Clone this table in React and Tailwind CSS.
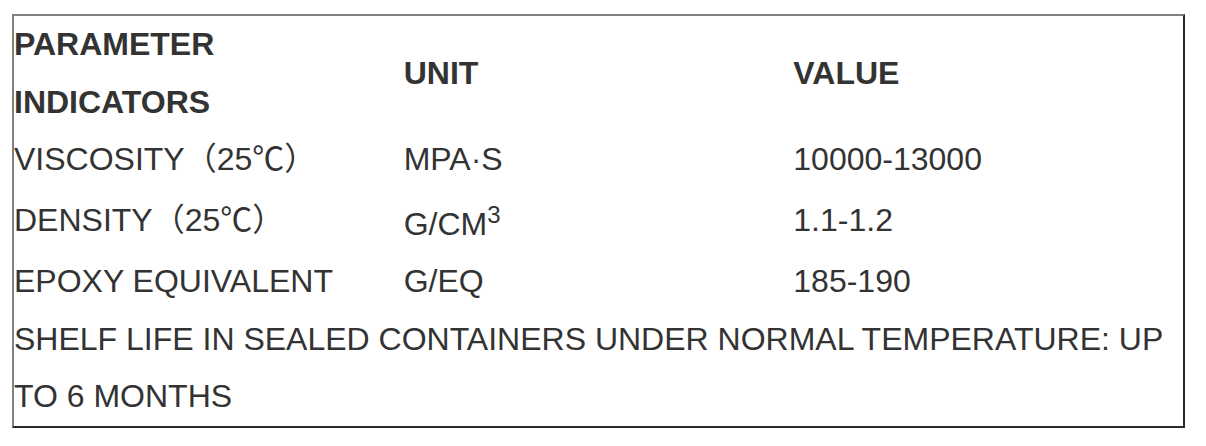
import React from "react";

const rows = [
  { name: "VISCOSITY（25℃）", unit: "MPA·S", value: "10000-13000" },
  { name: "DENSITY（25℃）", unit: "G/CM", sup: "3", value: "1.1-1.2" },
  { name: "EPOXY EQUIVALENT", unit: "G/EQ", value: "185-190" },
];

export default function App() {
  return (
    <div className="bg-white w-[1206px] h-[446px] pl-[12px] pt-[14px]">
      <table className="w-[1173px] table-fixed border-separate border-spacing-0 border-2 border-t-[#808080] border-l-[#808080] border-r-[#2b2b2b] border-b-[#2b2b2b] text-[#333] text-[32px] leading-[1.8] font-['Liberation_Sans','Noto_Sans_CJK_SC',sans-serif]">
        <tbody>
          <tr>
            <td className="p-0 font-bold align-middle">
              PARAMETER
              <br />
              INDICATORS
            </td>
            <td className="p-0 font-bold align-middle">UNIT</td>
            <td className="p-0 font-bold align-middle">VALUE</td>
          </tr>
          {rows.map((r) => (
            <tr key={r.name}>
              <td className="p-0 align-middle">{r.name}</td>
              <td className="p-0 align-middle">
                {r.unit}
                {r.sup && (
                  <sup className="static align-super text-[24px] leading-[52px]">
                    {r.sup}
                  </sup>
                )}
              </td>
              <td className="p-0 align-middle">{r.value}</td>
            </tr>
          ))}
          <tr>
            <td colSpan={3} className="p-0 align-middle">
              SHELF LIFE IN SEALED CONTAINERS UNDER NORMAL TEMPERATURE: UP TO 6
              MONTHS
            </td>
          </tr>
        </tbody>
      </table>
    </div>
  );
}
